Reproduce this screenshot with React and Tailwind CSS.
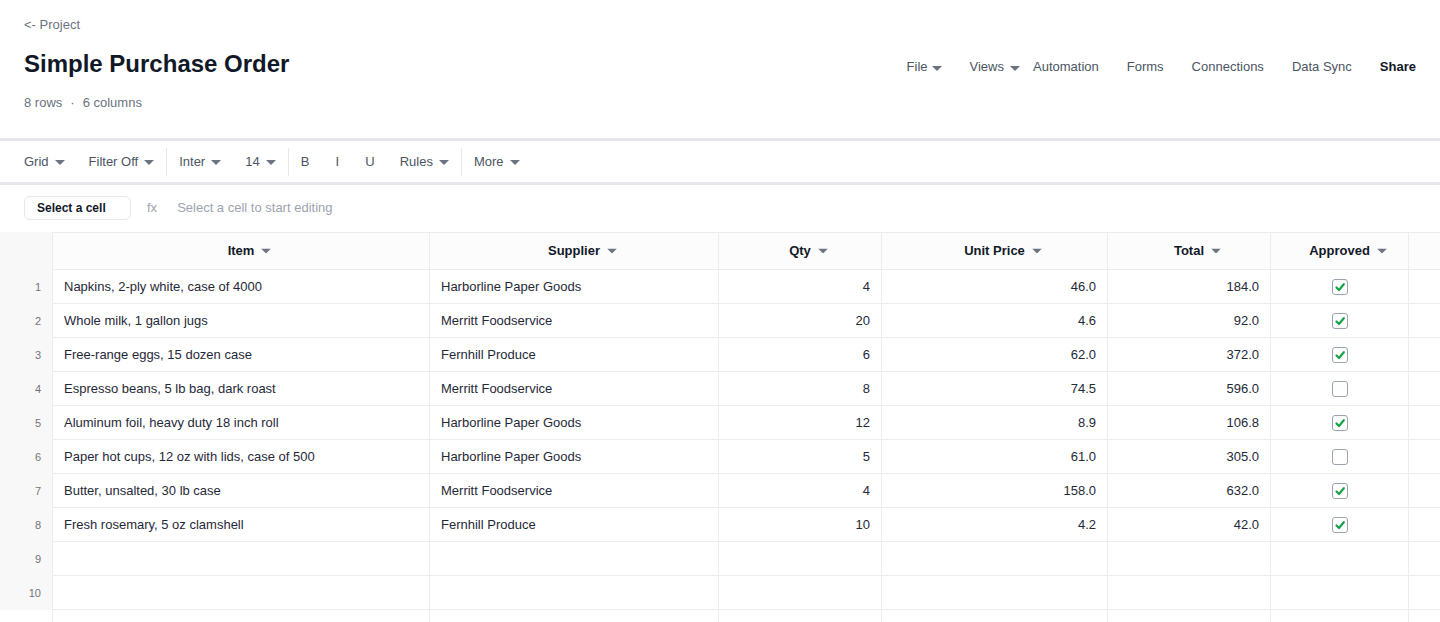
import React from "react";

function Caret({ className = "" }) {
  return (
    <svg width="10" height="5" viewBox="0 0 10 5" className={className}>
      <path d="M0 0 L10 0 L5 5 Z" fill="#6b7280" />
    </svg>
  );
}

function CheckBox({ checked }) {
  return (
    <span className="inline-flex h-4 w-4 items-center justify-center rounded-[3px] border border-[#9ca3af] bg-white">
      {checked && (
        <svg width="12" height="12" viewBox="0 0 12 12">
          <path d="M2.5 6.5 L5 9 L9.8 3.2" fill="none" stroke="#16a34a" strokeWidth="2.2" strokeLinecap="round" strokeLinejoin="round" />
        </svg>
      )}
    </span>
  );
}

const rows = [
  ["Napkins, 2-ply white, case of 4000", "Harborline Paper Goods", "4", "46.0", "184.0", true],
  ["Whole milk, 1 gallon jugs", "Merritt Foodservice", "20", "4.6", "92.0", true],
  ["Free-range eggs, 15 dozen case", "Fernhill Produce", "6", "62.0", "372.0", true],
  ["Espresso beans, 5 lb bag, dark roast", "Merritt Foodservice", "8", "74.5", "596.0", false],
  ["Aluminum foil, heavy duty 18 inch roll", "Harborline Paper Goods", "12", "8.9", "106.8", true],
  ["Paper hot cups, 12 oz with lids, case of 500", "Harborline Paper Goods", "5", "61.0", "305.0", false],
  ["Butter, unsalted, 30 lb case", "Merritt Foodservice", "4", "158.0", "632.0", true],
  ["Fresh rosemary, 5 oz clamshell", "Fernhill Produce", "10", "4.2", "42.0", true],
  null,
  null,
];

const gridCols = "grid grid-cols-[52px_378px_289px_163px_226px_163px_138px_1fr]";

function HeaderCell({ label, first }) {
  return (
    <div
      className={`flex h-[38px] items-center justify-center border-t border-b border-r border-[#ececec] bg-[#fcfcfc] ${first ? "border-l" : ""}`}
    >
      {label && (
        <span className="relative text-[13px] font-bold text-[#111827]">
          {label}
          <Caret className="absolute left-full top-1/2 ml-[7px] -translate-y-1/2" />
        </span>
      )}
    </div>
  );
}

export default function App() {
  return (
    <div className="flex h-[622px] flex-col overflow-hidden bg-white font-['Liberation_Sans',Arial,sans-serif] text-[#1f2937]">
      {/* Top header */}
      <div className="px-6 pt-[17px] pb-[27px]">
        <div className="text-[13px] leading-4 text-[#6b7280]">&lt;- Project</div>
        <div className="mt-[15px] flex items-center justify-between">
          <h1 className="text-2xl leading-8 font-bold text-[#111827]">Simple Purchase Order</h1>
          <nav className="flex items-center pt-1.5 text-[13px] leading-5 text-[#4b5563]">
            <span className="flex items-center gap-1">
              File
              <Caret className="mt-0.5" />
            </span>
            <span className="ml-7 flex items-center gap-1.5">
              Views
              <Caret className="mt-0.5" />
            </span>
            <span className="ml-[13px]">Automation</span>
            <span className="ml-7">Forms</span>
            <span className="ml-7">Connections</span>
            <span className="ml-7">Data Sync</span>
            <span className="ml-7 font-bold text-[#111827]">Share</span>
          </nav>
        </div>
        <div className="mt-[15px] flex items-center text-[13px] leading-4 text-[#6b7280]">
          <span>8 rows</span>
          <span className="mx-2">·</span>
          <span>6 columns</span>
        </div>
      </div>

      {/* Toolbar */}
      <div className="flex h-[47px] items-center border-y-[3px] border-[#e5e7eb] px-3 pt-px text-[13px] text-[#4b5563]">
        <span className="flex items-center gap-1.5 px-3">Grid<Caret /></span>
        <span className="flex items-center gap-1.5 px-3">Filter Off<Caret /></span>
        <span className="h-7 w-px bg-[#e5e7eb]" />
        <span className="flex items-center gap-1.5 px-3">Inter<Caret /></span>
        <span className="flex items-center gap-1.5 px-3">14<Caret /></span>
        <span className="h-7 w-px bg-[#e5e7eb]" />
        <span className="flex min-w-8 justify-center px-3">B</span>
        <span className="flex min-w-8 justify-center px-3">I</span>
        <span className="flex min-w-8 justify-center px-3">U</span>
        <span className="ml-px flex items-center gap-1.5 px-3">Rules<Caret /></span>
        <span className="h-7 w-px bg-[#e5e7eb]" />
        <span className="flex items-center gap-1.5 px-3">More<Caret /></span>
      </div>

      {/* Formula bar */}
      <div className="flex items-center px-6 pt-[11px] pb-3">
        <div className="flex h-6 w-[107px] items-center rounded-md border border-[#e5e7eb] px-3 text-xs font-bold text-[#111827]">
          Select a cell
        </div>
        <span className="ml-4 text-[13px] text-[#9ca3af]">fx</span>
        <span className="ml-5 text-[13px] text-[#9ca3af]">Select a cell to start editing</span>
      </div>

      {/* Grid */}
      <div className="flex flex-1 flex-col">
        <div className={gridCols}>
          <div className="bg-[#f8f8f8]" />
          <HeaderCell label="Item" first />
          <HeaderCell label="Supplier" />
          <HeaderCell label="Qty" />
          <HeaderCell label="Unit Price" />
          <HeaderCell label="Total" />
          <HeaderCell label="Approved" />
          <div className="h-[38px] border-t border-b border-[#ececec] bg-[#fcfcfc]" />
        </div>
        {rows.map((r, i) => (
          <div key={i} className={`${gridCols} h-[34px] text-[13px]`}>
            <div className="flex items-center justify-end bg-[#f8f8f8] pr-[11px] text-[11px] text-[#737373]">
              {i + 1}
            </div>
            <div className="flex items-center overflow-hidden whitespace-nowrap border-l border-r border-b border-[#ececec] px-[11px]">
              {r ? r[0] : ""}
            </div>
            <div className="flex items-center overflow-hidden whitespace-nowrap border-r border-b border-[#ececec] px-[11px]">
              {r ? r[1] : ""}
            </div>
            <div className="flex items-center justify-end border-r border-b border-[#ececec] px-[11px]">
              {r ? r[2] : ""}
            </div>
            <div className="flex items-center justify-end border-r border-b border-[#ececec] px-[11px]">
              {r ? r[3] : ""}
            </div>
            <div className="flex items-center justify-end border-r border-b border-[#ececec] px-[11px]">
              {r ? r[4] : ""}
            </div>
            <div className="flex items-center justify-center border-r border-b border-[#ececec]">
              {r ? <CheckBox checked={r[5]} /> : null}
            </div>
            <div className="border-b border-[#ececec]" />
          </div>
        ))}
        <div className={`${gridCols} flex-1`}>
          <div />
          <div className="border-l border-r border-[#ececec]" />
          <div className="border-r border-[#ececec]" />
          <div className="border-r border-[#ececec]" />
          <div className="border-r border-[#ececec]" />
          <div className="border-r border-[#ececec]" />
          <div className="border-r border-[#ececec]" />
          <div />
        </div>
      </div>
    </div>
  );
}
